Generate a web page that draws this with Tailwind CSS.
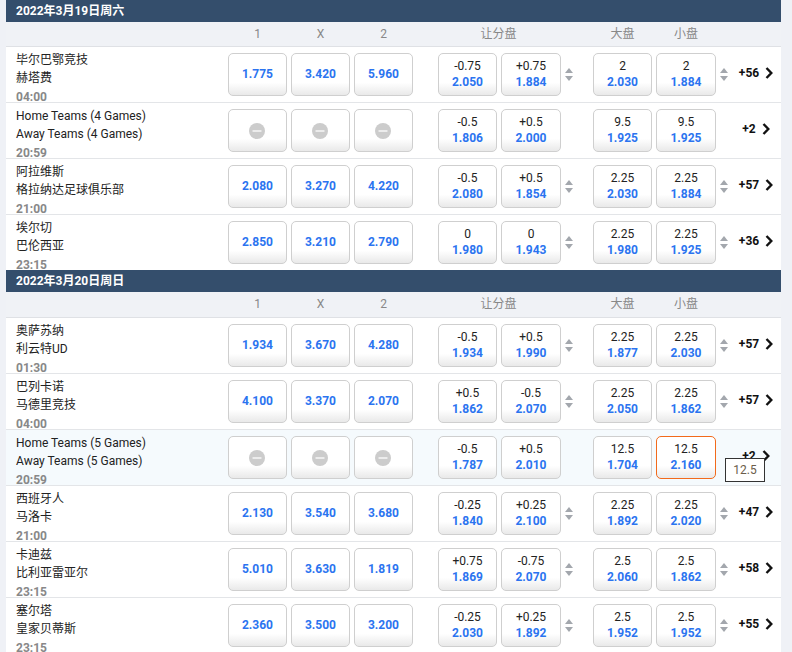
<!DOCTYPE html>
<html lang="en">
<head>
<meta charset="UTF-8">
<script src="https://cdn.jsdelivr.net/npm/@tailwindcss/browser@4"></script>
<title>赛事赔率</title>
</head>
<body class="bg-[#eff1f6] font-['Roboto','Noto_Sans_CJK_SC',sans-serif] overflow-hidden h-[652px]">
<div id="app" class="ml-[6px] w-[775px] bg-white"></div>

<script>
const days = [
  { title: '2022年3月19日周六', matches: [
    { a: '毕尔巴鄂竞技', b: '赫塔费', t: '04:00', o: ['1.775','3.420','5.960'], h: ['-0.75','2.050','+0.75','1.884'], ou: ['2','2.030','2','1.884'], more: '+56', arrows: true },
    { a: 'Home Teams (4 Games)', b: 'Away Teams (4 Games)', t: '20:59', o: null, h: ['-0.5','1.806','+0.5','2.000'], ou: ['9.5','1.925','9.5','1.925'], more: '+2' },
    { a: '阿拉维斯', b: '格拉纳达足球俱乐部', t: '21:00', o: ['2.080','3.270','4.220'], h: ['-0.5','2.080','+0.5','1.854'], ou: ['2.25','2.030','2.25','1.884'], more: '+57', arrows: true },
    { a: '埃尔切', b: '巴伦西亚', t: '23:15', o: ['2.850','3.210','2.790'], h: ['0','1.980','0','1.943'], ou: ['2.25','1.980','2.25','1.925'], more: '+36', arrows: true, last: true },
  ]},
  { title: '2022年3月20日周日', matches: [
    { a: '奥萨苏纳', b: '利云特UD', t: '01:30', o: ['1.934','3.670','4.280'], h: ['-0.5','1.934','+0.5','1.990'], ou: ['2.25','1.877','2.25','2.030'], more: '+57', arrows: true },
    { a: '巴列卡诺', b: '马德里竞技', t: '04:00', o: ['4.100','3.370','2.070'], h: ['+0.5','1.862','-0.5','2.070'], ou: ['2.25','2.050','2.25','1.862'], more: '+57', arrows: true },
    { a: 'Home Teams (5 Games)', b: 'Away Teams (5 Games)', t: '20:59', o: null, h: ['-0.5','1.787','+0.5','2.010'], ou: ['12.5','1.704','12.5','2.160'], more: '+2', active: true },
    { a: '西班牙人', b: '马洛卡', t: '21:00', o: ['2.130','3.540','3.680'], h: ['-0.25','1.840','+0.25','2.100'], ou: ['2.25','1.892','2.25','2.020'], more: '+47', arrows: true },
    { a: '卡迪兹', b: '比利亚雷亚尔', t: '23:15', o: ['5.010','3.630','1.819'], h: ['+0.75','1.869','-0.75','2.070'], ou: ['2.5','2.060','2.5','1.862'], more: '+58', arrows: true },
    { a: '塞尔塔', b: '皇家贝蒂斯', t: '23:15', o: ['2.360','3.500','3.200'], h: ['-0.25','2.030','+0.25','1.892'], ou: ['2.5','1.952','2.5','1.952'], more: '+55', arrows: true },
  ]},
];

const btn = 'h-[43px] rounded-[5px] border border-[#cfcfcf] bg-gradient-to-b from-white from-70% to-[#e9e9e9] flex flex-col items-center justify-center';
const activeBtn = 'h-[43px] rounded-[5px] border border-[#f26a1b] bg-gradient-to-b from-white from-70% to-[#e9e9e9] flex flex-col items-center justify-center';
const w59 = 'w-[59px] ';
const w60 = 'w-[60px] ';

function single(val) {
  const inner = val
    ? `<span class="text-[12px] leading-[16px] pb-[2px] font-bold text-[#2b74f0]">${val}</span>`
    : `<svg class="-ml-[1px]" width="16" height="16" viewBox="0 0 16 16"><circle cx="8" cy="8" r="8" fill="#cccccc"/><rect x="3.5" y="7" width="9" height="2" rx="0.5" fill="#ececec"/></svg>`;
  return `<div class="${w59}${btn}">${inner}</div>`;
}

function twoLine(line, odd, width, extra) {
  return `<div class="${width}${extra || btn} pb-[2px]"><span class="text-[12px] leading-[16px] text-[#222]">${line}</span><span class="text-[12px] leading-[16px] font-bold text-[#2b74f0]">${odd}</span></div>`;
}

function arrows(show) {
  return `<div class="w-[23px] pl-[4px] flex flex-col items-start justify-center gap-[3px] ${show ? '' : 'invisible'}">
    <svg width="8" height="5" viewBox="0 0 8 5"><path d="M4 0L8 5H0Z" fill="#a3a7ad"/></svg>
    <svg width="8" height="5" viewBox="0 0 8 5"><path d="M4 5L8 0H0Z" fill="#a3a7ad"/></svg>
  </div>`;
}

function row(m) {
  return `<div class="relative flex ${m.last ? 'h-[55px]' : 'h-[56px] border-b border-[#e3e5e8]'} ${m.active ? 'bg-[#f5fafd]' : ''}">
    <div class="w-[222px] h-[55px] pl-[10px] overflow-hidden text-[12px] text-[#222]">
      <div class="h-[18px] leading-[18px] mt-[4px] whitespace-nowrap">${m.a}</div>
      <div class="h-[18px] leading-[18px] whitespace-nowrap">${m.b}</div>
      <div class="leading-[17px] mt-[2px] font-bold text-[#888]">${m.t}</div>
    </div>
    <div class="flex gap-[4px] mt-[6px] h-[43px]">
      ${single(m.o ? m.o[0] : null)}${single(m.o ? m.o[1] : null)}${single(m.o ? m.o[2] : null)}
    </div>
    <div class="flex gap-[4px] mt-[6px] h-[43px] ml-[25px]">
      ${twoLine(m.h[0], m.h[1], w59)}${twoLine(m.h[2], m.h[3], w60)}
    </div>
    <div class="mt-[6px] h-[43px] flex">${arrows(m.arrows)}</div>
    <div class="flex gap-[4px] mt-[6px] h-[43px] ml-[9px]">
      ${twoLine(m.ou[0], m.ou[1], w59)}${twoLine(m.ou[2], m.ou[3], w60, m.active ? activeBtn : null)}
    </div>
    <div class="mt-[6px] h-[43px] flex">${arrows(m.arrows)}</div>
    <div class="flex items-center justify-center gap-[6px] w-[34px] h-[51px] text-[12px] font-bold text-[#111]">
      <span>${m.more}</span>
      <svg class="shrink-0" width="8" height="12" viewBox="0 0 8 12"><path d="M1.5 1L6.3 6L1.5 11" fill="none" stroke="#111" stroke-width="2.4"/></svg>
    </div>
    ${m.active ? '<div class="absolute left-[719px] top-[28px] w-[40px] h-[24px] bg-white border border-[#333] flex items-center justify-center text-[12px] text-[#6b5d4a] z-10">12.5</div>' : ''}
  </div>`;
}

function colHead(i) {
  const h = i === 0 ? 'h-[25px]' : 'h-[26px] pb-[1px]';
  return `<div class="${h} flex items-center bg-[#f0f2f6] border-b border-[#dfe1e5] text-[12px] text-[#888]">
    <div class="w-[222px]"></div>
    <div class="w-[59px] text-center">1</div><div class="w-[4px]"></div>
    <div class="w-[59px] text-center">X</div><div class="w-[4px]"></div>
    <div class="w-[59px] text-center">2</div>
    <div class="w-[24px]"></div>
    <div class="w-[123px] text-center">让分盘</div>
    <div class="w-[33px]"></div>
    <div class="w-[59px] text-center">大盘</div><div class="w-[4px]"></div>
    <div class="w-[60px] text-center">小盘</div>
  </div>`;
}

document.getElementById('app').innerHTML = days.map((d, i) => `
  <div class="h-[22px] pl-[10px] bg-[#344e6c] text-white text-[12px] font-bold leading-[22px]">${d.title}</div>
  ${colHead(i)}
  ${d.matches.map(row).join('')}
`).join('');
</script>
</body>
</html>
